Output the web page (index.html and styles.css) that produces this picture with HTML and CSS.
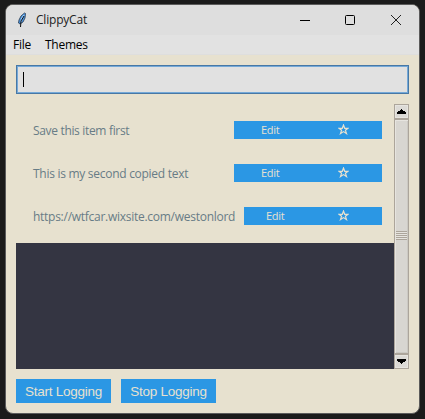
FILE: index.html
```html
<!DOCTYPE html>
<html lang="en">
<head>
<meta charset="utf-8">
<title>ClippyCat</title>
<link rel="stylesheet" href="styles.css">
</head>
<body>
<div class="window">
  <header class="titlebar">
    <svg class="feather" width="12" height="18" viewBox="0 0 12 18"><path d="M8.500 2 5 5 3 9 2.500 12 4 13 7 11 9 7 9.500 2.500Z" fill="#4b91dc" stroke="#26384d" stroke-width=".8"/><path d="M8 4 5.500 8 5 11" fill="none" stroke="#9bd0ff" stroke-width="1.300"/><path d="M8 5 5 10 4.500 16" fill="none" stroke="#111" stroke-width="1"/></svg>
    <span class="title">ClippyCat</span>
    <div class="controls">
      <svg width="10" height="10"><path d="M0 5.500H10" stroke="#000"/></svg>
      <svg width="10" height="10"><rect x=".5" y=".5" width="9" height="9" rx="1" fill="none" stroke="#000"/></svg>
      <svg class="close" width="10" height="10"><path d="M0 0 10 10M10 0 0 10" stroke="#222"/></svg>
    </div>
  </header>
  <nav class="menu"><span class="file">File</span><span class="themes">Themes</span></nav>
  <main class="content">
    <div class="search"><span class="caret"></span></div>
    <div class="clips">
      <div class="list">
        <div class="row"><span class="label one">Save this item first</span><div class="actions"><span class="edit">Edit</span><svg class="star" width="11" height="11" viewBox="0 0 11 11"><path d="M5.500 1 6.700 4.300H10L7.400 6.300 8.500 9.600 5.500 7.600 2.500 9.600 3.600 6.300 1 4.300H4.300Z"/></svg></div></div>
        <div class="row"><span class="label two">This is my second copied text</span><div class="actions"><span class="edit">Edit</span><svg class="star" width="11" height="11" viewBox="0 0 11 11"><path d="M5.500 1 6.700 4.300H10L7.400 6.300 8.500 9.600 5.500 7.600 2.500 9.600 3.600 6.300 1 4.300H4.300Z"/></svg></div></div>
        <div class="row"><span class="label three">https://wtfcar.wixsite.com/westonlord</span><div class="actions narrow"><span class="edit">Edit</span><svg class="star" width="11" height="11" viewBox="0 0 11 11"><path d="M5.500 1 6.700 4.300H10L7.400 6.300 8.500 9.600 5.500 7.600 2.500 9.600 3.600 6.300 1 4.300H4.300Z"/></svg></div></div>
        <div class="empty"></div>
      </div>
      <div class="scrollbar">
        <div class="arrow"><svg width="9" height="5" shape-rendering="crispEdges"><path d="M4 0H5V1H6V2H8V3H9V5H0V3H1V2H3V1H4Z"/></svg></div>
        <div class="thumb"><div class="grip"></div></div>
        <div class="arrow"><svg width="9" height="5" shape-rendering="crispEdges"><path d="M4 5H5V4H6V3H8V2H9V0H0V2H1V3H3V4H4Z"/></svg></div>
      </div>
    </div>
    <footer><button class="start">Start Logging</button><button class="stop">Stop Logging</button></footer>
  </main>
</div>
</body>
</html>
```
FILE: styles.css
```css
* { box-sizing: border-box; }
body { margin: 0; width: 425px; height: 419px; padding: 4px 5px; background: #1b1b1b; font: 12px/16px "Open Sans", sans-serif; overflow: hidden; }
.window { width: 415px; height: 410px; border: 1px solid #5b5b5b; border-radius: 8px; background: #e7e1cf; overflow: hidden; }
svg { display: block; flex: none; }
.titlebar { height: 30px; background: #dedede; display: flex; align-items: center; padding-left: 10px; }
.title { margin-left: 8px; letter-spacing: -.2px; color: #222; }
.controls { display: flex; gap: 35px; margin-left: auto; margin-right: 18px; padding-bottom: 1px; }
.close { margin-left: 1px; }
.menu { height: 20px; background: #e2e2e2; border-bottom: 1px solid #dedede; display: flex; gap: 14px; padding: 2px 7px 0; letter-spacing: -.25px; }
.content { padding: 10px 10px 0; }
.search { width: 393px; height: 29px; border: 1px solid #4878a5; background: #e1e1e1; box-shadow: inset 0 0 0 1px #75a9d8; padding: 6px; }
.caret { display: block; width: 1px; height: 15px; background: #000; }
.clips { display: flex; margin-top: 10px; height: 265px; width: 393px; }
.list { width: 378px; padding-top: 4px; display: flex; flex-direction: column; }
.row { height: 43px; display: flex; align-items: center; padding: 0 12px 0 17px; justify-content: space-between; }
.label { color: #687c86; white-space: nowrap; margin-top: 2px; }
.one { letter-spacing: -.33px; }
.two { letter-spacing: -.28px; }
.three { letter-spacing: -.27px; }
.actions { width: 148px; height: 18px; background: #2b97e4; display: flex; align-items: center; color: #e7e1cf; font-size: 11px; flex: none; padding: 0 33px 0 27px; justify-content: space-between; }
.edit { letter-spacing: -.3px; }
.narrow { width: 138px; padding-left: 22px; }
.star path { fill: none; stroke: #e7e1cf; stroke-width: 1.2; }
.empty { flex: 1; margin-top: 6px; background: #343542; }
.scrollbar { width: 15px; background: #d8d6d1; border: 1px solid #aca59b; display: flex; flex-direction: column; }
.arrow { height: 13px; display: flex; align-items: center; justify-content: center; background: #dcdad6; border: 1px solid #e6e4df; }
.thumb { flex: 1; border-top: 2px solid #aca59b; border-bottom: 2px solid #aca59b; display: flex; align-items: center; justify-content: center; box-shadow: inset 1px 1px #e6e4df, inset -1px -1px #cbc9c3; }
.grip { width: 11px; height: 9px; margin-bottom: 2px; background: repeating-linear-gradient(#aca59b 0 1px, #e6e4df 1px 2px); }
footer { display: flex; gap: 10px; margin-top: 10px; }
button { width: 95px; height: 24px; padding: 1px 0 0; border: 0; background: #2b97e4; color: #e7e1cf; font: 13.5px/23px "Liberation Sans", sans-serif; letter-spacing: -.25px; white-space: nowrap; }
```
